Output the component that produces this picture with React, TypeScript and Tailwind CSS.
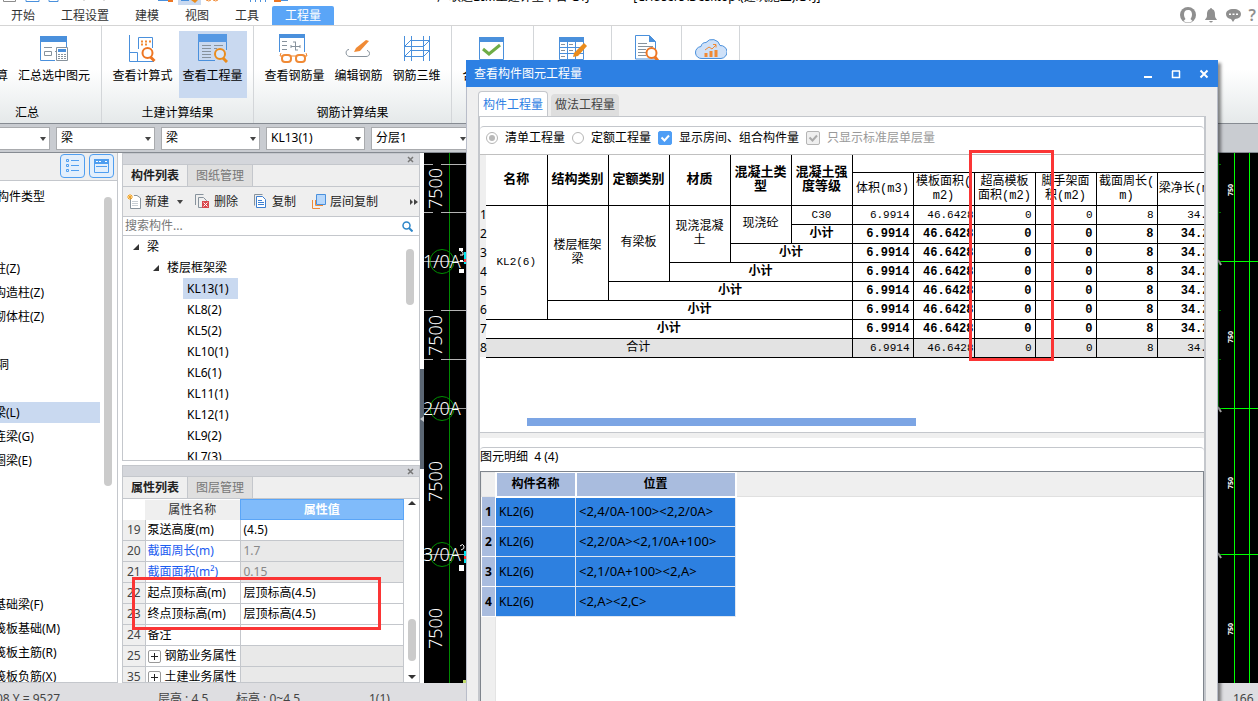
import type { ReactNode } from "react";
import clsx from "clsx";

const BLUE = "#4a90dc";
const ORANGE = "#f08a35";
const GRAY = "#87929c";

/* ---------- ribbon icons ---------- */

function SummaryIcon() {
	return (
		<svg width="28" height="26" viewBox="0 0 28 26" fill="none">
			<path d="M.5 6v18.500H15M26.500 6v5" stroke={BLUE} />
			<path d="M0 0h27v6H0z" fill={BLUE} />
			<path d="M4 11.500h8M4.500 15.500h7v4h-7zM15 15.500h1" stroke={GRAY} />
			<path d="M16.500 11.500h11v13h-11z" fill="#fff" stroke={GRAY} />
			<path d="M18 13h8v3h-8z" fill={BLUE} />
			<path d="M18 18.500h8M18 20.500h8M18 22.500h8" stroke={GRAY} strokeDasharray="2 1" />
		</svg>
	);
}

function FormulaIcon() {
	return (
		<svg width="28" height="28" viewBox="0 0 28 28" fill="none">
			<path d="M1.500 0v26.500H26M1.500 17.500h8v9M10.500 14V2.500h14V13" stroke={BLUE} />
			<path d="M13 6.500h10M13 9.500h7" stroke={ORANGE} strokeWidth="2" strokeDasharray="2 2" />
			<circle cx="19.500" cy="18" r="5" fill="#fff" stroke="#ee7623" strokeWidth="2" />
			<path d="M22.500 22l4 4" stroke="#ee7623" strokeWidth="3" />
		</svg>
	);
}

function ViewQuantityIcon() {
	return (
		<svg width="30" height="29" viewBox="0 0 30 29" fill="none">
			<path d="M.5 7v19.500H17M28.500 7v9" stroke={BLUE} />
			<path d="M0 0h29v8H0z" fill="#5598e3" />
			<path d="M4 11.500h9M4 14.500h9M4 17.500h9M4 20.500h9M4 23.500h9M16 11.500h9M16 14.500h3" stroke={GRAY} />
			<circle cx="22" cy="20" r="5" fill="#d9e6f7" stroke="#ea8c1c" strokeWidth="2" />
			<path d="M25 24l4 4" stroke="#ea8c1c" strokeWidth="3" />
		</svg>
	);
}

function RebarViewIcon() {
	return (
		<svg width="30" height="29" viewBox="0 0 30 29" fill="none">
			<path d="M.5 4v14M25.500 4v14" stroke={BLUE} />
			<path d="M0 0h26v4H0z" fill={BLUE} />
			<path d="M3 7.500h5M3 11.500h5M3 15.500h5M16.500 8v8M12 12.500h9M12 11v3M21 11v3M14 8h3M16 16h3" stroke={GRAY} />
			<path d="M2 19l-1 3h27l-1-3" stroke={ORANGE} />
			<rect x="3" y="21" width="9" height="7" rx="3" fill="#fff" stroke={ORANGE} strokeWidth="2" />
			<rect x="17" y="21" width="9" height="7" rx="3" fill="#fff" stroke={ORANGE} strokeWidth="2" />
		</svg>
	);
}

function EditRebarIcon() {
	return (
		<svg width="26" height="28" viewBox="0 0 26 28" fill="none">
			<path d="M4 14.500c-4 0-4 7 1 7h16c5 0 4-6 1-6" stroke={GRAY} />
			<path d="M21 5l3 1-9 10-6 1 2-4z" fill={ORANGE} />
		</svg>
	);
}

function Rebar3dIcon() {
	return (
		<svg width="28" height="26" viewBox="0 0 28 26" fill="none" stroke={BLUE}>
			<path d="M1.500 0v25M8.500 0v25M20.500 0v25M26.500 0v25M8 4.500h19M1 10.500h19M8 14.500h19M1 20.500h19M1 11l7-7M20 11l7-7M1 21l7-7M20 21l7-7" />
		</svg>
	);
}

function CheckDocIcon() {
	return (
		<svg width="26" height="24" viewBox="0 0 26 24" fill="none">
			<path d="M.5.500h24v22H.5z" stroke={BLUE} fill="#fff" />
			<path d="M0 0h25v5H0z" fill={BLUE} />
			<path d="M4 12l6 5L21 8" stroke="#6fad46" strokeWidth="3" />
		</svg>
	);
}

function EditTableIcon() {
	return (
		<svg width="28" height="24" viewBox="0 0 28 24" fill="none">
			<path d="M.5.500h24v22H.5zM8.500 4v18M16.500 4v18M0 10.500h25M0 16.500h25" stroke={BLUE} />
			<path d="M0 0h25v5H0z" fill={BLUE} />
			<path d="M2 7.500h4M10 7.500h4M2 13.500h4M10 13.500h4M2 19.500h4" stroke={GRAY} />
			<path d="M25 6l3 3-9 10-5 1 1-4z" fill="#ea8c1c" />
		</svg>
	);
}

function ReportIcon() {
	return (
		<svg width="24" height="28" viewBox="0 0 24 28" fill="none">
			<path d="M.5.500h14l6 6V24H.5z" stroke={BLUE} fill="#fff" />
			<path d="M14 0l7 7h-7z" fill={BLUE} />
			<path d="M3 8.500h9M3 11.500h15M3 14.500h8M3 17.500h8M3 20.500h8" stroke={GRAY} />
			<circle cx="16.500" cy="18" r="5" fill="#fff" stroke="#ee7623" strokeWidth="2" />
			<path d="M20 22l3 4" stroke="#ee7623" strokeWidth="3" />
		</svg>
	);
}

function CloudIcon() {
	return (
		<svg width="32" height="22" viewBox="0 0 32 22" fill="none">
			<path d="M7 20.500a6 6 0 01-1-12 5 5 0 015-4 8 8 0 0114 3 6.500 6.500 0 011 13z" fill="#cfe1f8" stroke={BLUE} />
			<path d="M11 19v-4M16 19v-6M21 19v-7" stroke={ORANGE} strokeWidth="3" />
			<path d="M10 12l4-3 3 2 4-4M18 6.500h3v3" stroke={ORANGE} />
		</svg>
	);
}

/* Quick access bar: only its lower edge shows above the menu. */
function QuickAccess() {
	return (
		<svg width="300" height="6" viewBox="0 0 300 6" fill="none" aria-hidden="true">
			<path d="M3.500 0v1.500h12V0" stroke="#8c8c8c" />
			<path d="M26 0v1.500h13V0M49 0v1.500h9V0" stroke={BLUE} />
			<path d="M178 0h23v5h-23z" fill="#c9d9f0" />
			<path d="M158 0h14v1h-14zM181 0h8v1h-8zM281 0h7v1h-7z" fill={BLUE} />
			<path d="M168 0h5v2h-5zM274 0h7v2h-7z" fill="#ee7623" />
			<path d="M191 0h7l-3 3z" fill="#ea8c1c" />
			<path d="M206 0q3 2 5 0M213 0q3 2 5 0" stroke={ORANGE} />
			<path d="M250.500 0v2M255.500 0v2M260.500 0v2M265.500 0v2" stroke={BLUE} />
			<path d="M84 0v1M104 0v1" stroke="#bbb" />
		</svg>
	);
}

/* ---------- shared pieces ---------- */

function RibbonButton({ icon, label, active, title }: { icon: ReactNode; label?: string; active?: boolean; title?: string }) {
	return (
		<button
			aria-label={title}
			className={clsx("flex h-[67px] shrink-0 flex-col items-center whitespace-nowrap", active ? "w-[68px] bg-[#c9d9f0]" : "px-1")}
		>
			<span className="flex h-[35px] items-center justify-center">{icon}</span>
			<span className="leading-5">{label}</span>
		</button>
	);
}

function RibbonGroup({ title, className, children }: { title?: string; className: string; children: ReactNode }) {
	return (
		<div className={clsx("flex shrink-0 flex-col border-r border-[#d3d6d9] pt-[5px]", className)}>
			<div className="flex justify-center gap-[2px]">{children}</div>
			<div className="pt-[5px] text-center leading-5">{title}</div>
		</div>
	);
}

function Combo({ value, label }: { value: string; label: string }) {
	return (
		<label className="relative block w-[99px] shrink-0">
			<select aria-label={label} className="h-[23px] w-full appearance-none border border-[#a9abae] bg-white px-1 text-[12px] text-black">
				<option>{value}</option>
			</select>
			<svg className="pointer-events-none absolute top-[10px] right-1" width="6" height="4" viewBox="0 0 6 4">
				<path d="M0 0h6L3 4z" fill="#444" />
			</svg>
		</label>
	);
}

function PanelTitle() {
	return (
		<div className="flex h-[11px] shrink-0 items-center justify-end border-b border-[#c4c7cc] bg-[#d4d6db] pr-[5px]">
			<button aria-label="关闭">
				<svg width="7" height="7" viewBox="0 0 7 7" className="block">
					<path d="M1 1l5 5M6 1L1 6" stroke="#777" strokeWidth="1.500" />
				</svg>
			</button>
		</div>
	);
}

function PanelTabs({ tabs }: { tabs: string[] }) {
	return (
		<div className="flex h-[22px] shrink-0 border-b border-[#c4c7cc] bg-[#efefef]">
			{tabs.map((tab, i) => (
				<button
					key={tab}
					className={clsx("border-r border-[#c4c7cc] px-2 leading-[21px]", i === 0 ? "font-semibold text-[#222]" : "bg-[#dfdfdf] text-[#777]")}
				>
					{tab}
				</button>
			))}
		</div>
	);
}

/* ---------- left side ---------- */

const categories = ["构件类型", "", "", "柱(Z)", "构造柱(Z)", "砌体柱(Z)", "", "洞", "", "梁(L)", "连梁(G)", "圈梁(E)", "", "", "", "", "", "基础梁(F)", "筏板基础(M)", "筏板主筋(R)", "筏板负筋(X)"];

function CategoryPanel() {
	return (
		<aside className="flex w-[118px] shrink-0 flex-col border-r border-b border-[#c4c7cc] bg-white">
			<div className="flex h-7 shrink-0 items-start justify-end gap-1 border-b border-[#c4c7cc] bg-[#efefef] pt-px pr-[3px]">
				<button aria-label="列表" className="flex h-6 w-[25px] items-center justify-center rounded-sm border border-[#4f9ef0] bg-[#e3effc]">
					<svg width="13" height="14" viewBox="0 0 13 14" fill="none" stroke="#4f9ef0">
						<path d="M.5.500h2v2h-2zM.5 5.500h2v2h-2zM.5 10.500h2v2h-2zM5 1.500h8M5 6.500h8M5 11.500h8" />
					</svg>
				</button>
				<button aria-label="面板" className="flex h-6 w-[25px] items-center justify-center rounded-sm border border-[#4f9ef0] bg-[#e3effc]">
					<svg width="15" height="14" viewBox="0 0 15 14" fill="none">
						<path d="M.5.500h14v13H.5z" stroke="#4f9ef0" />
						<path d="M0 0h15v5H0z" fill="#4f9ef0" />
						<path d="M2 2.500h6M11 2.500h3" stroke="#fff" strokeDasharray="2 1" />
						<path d="M2 7.500h11" stroke="#4f9ef0" />
					</svg>
				</button>
			</div>
			<div className="flex min-h-0 flex-1">
				<ul className="w-[100px] overflow-hidden pt-[3px]">
					{categories.map((name, i) => (
						<li key={i} className="flex h-6 items-center">
							<span className={clsx("block h-[21px] w-full leading-[22px] whitespace-nowrap", name === "梁(L)" && "bg-[#c9d9f0]")}>
								<span className={clsx("block", i === 0 || name === "洞" ? "-ml-[3px]" : "-ml-[6px]")}>{name}</span>
							</span>
						</li>
					))}
				</ul>
				<div className="mt-4 ml-1 h-[289px] w-2 rounded-full bg-[#cbcbcb]" />
			</div>
		</aside>
	);
}

const beams = ["KL13(1)", "KL8(2)", "KL5(2)", "KL10(1)", "KL6(1)", "KL11(1)", "KL12(1)", "KL9(2)", "KL7(3)"];

function Arrow() {
	return (
		<svg width="6" height="6" viewBox="0 0 6 6">
			<path d="M6 0v6H0z" fill="#333" />
		</svg>
	);
}

function ComponentPanel() {
	return (
		<section className="flex h-[308px] shrink-0 flex-col border border-[#c4c7cc] bg-white">
			<PanelTitle />
			<PanelTabs tabs={["构件列表", "图纸管理"]} />
			<div className="flex h-[30px] shrink-0 items-center border-b border-[#c4c7cc] bg-[#efefef] pl-1 whitespace-nowrap text-[#222]">
				<button className="flex items-center gap-1">
					<svg width="14" height="15" viewBox="0 0 14 15" fill="none">
						<path d="M3.500 4v10.500h10V4L10 1.500H7" fill="#fff" stroke={GRAY} />
						<path d="M5 7.500h6M5 9.500h6M5 11.500h6" stroke="#c8ced4" />
						<path d="M3 0v6M0 3h6M1 1l4 4M5 1L1 5" stroke="#f5a21d" />
					</svg>
					新建
				</button>
				<svg className="ml-2" width="6" height="4" viewBox="0 0 6 4"><path d="M0 0h6L3 4z" fill="#444" /></svg>
				<button className="ml-3 flex items-center gap-[5px]">
					<svg width="14" height="15" viewBox="0 0 14 15" fill="none">
						<path d="M.5 11V.500h8M3.500 3.500h5l3 3v7h-8z" stroke={GRAY} />
						<path d="M7 7h7v7H7z" fill="#d9484d" />
						<path d="M8.500 8.500l4 4M12.500 8.500l-4 4" stroke="#fff" />
					</svg>
					删除
				</button>
				<button className="ml-4 flex items-center gap-[6px]">
					<svg width="12" height="15" viewBox="0 0 12 15" fill="none">
						<path d="M.5 11.500V.500h8" stroke={GRAY} />
						<path d="M2.500 2.500h6l3 3v8h-9z" fill="#fff" stroke="#3d7fd0" />
						<path d="M4 6.500h4M4 8.500h6M4 10.500h6" stroke="#3d7fd0" />
					</svg>
					复制
				</button>
				<button className="ml-4 flex items-center gap-1">
					<svg width="14" height="15" viewBox="0 0 14 15" fill="none">
						<path d="M.5 6v8.500H8M3.500 6v5.500H11" stroke={ORANGE} />
						<path d="M4.500.500h9v10h-9z" fill="#b8d8fb" stroke={BLUE} />
					</svg>
					层间复制
				</button>
				<button aria-label="更多" className="ml-auto pr-px">
					<svg width="8" height="6" viewBox="0 0 8 6"><path d="M0 0l3 3-3 3zM4 0l4 3-4 3z" fill="#444" /></svg>
				</button>
			</div>
			<div className="flex h-[19px] shrink-0 items-center border-b border-[#c4c7cc] pr-[6px] pl-[2px]">
				<input aria-label="搜索构件" placeholder="搜索构件..." className="min-w-0 flex-1 bg-transparent text-[12px] outline-none placeholder:text-[#777]" />
				<svg width="11" height="11" viewBox="0 0 11 11" fill="none" stroke="#2e86c8">
					<circle cx="4.500" cy="4.500" r="3.500" strokeWidth="1.500" />
					<path d="M7 7l3.500 3.500" strokeWidth="2" />
				</svg>
			</div>
			<div className="flex min-h-0 flex-1">
				<ul className="flex-1 overflow-hidden leading-[21px]">
					<li className="flex items-center gap-2 pl-[10px]"><Arrow />梁</li>
					<li className="flex items-center gap-2 pl-[30px]"><Arrow />楼层框架梁</li>
					{beams.map((beam, i) => (
						<li key={beam} className="pl-[60px]">
							<span className={clsx("inline-block px-1", i === 0 && "w-[55px] bg-[#c9d9f0]")}>{beam}</span>
						</li>
					))}
				</ul>
				<div className="mt-[13px] mr-[5px] h-14 w-2 rounded-full bg-[#cbcbcb]" />
			</div>
		</section>
	);
}

const properties = [
	{ no: 19, name: "泵送高度(m)", value: "(4.5)" },
	{ no: 20, name: "截面周长(m)", value: "1.7", locked: true },
	{ no: 21, name: "截面面积(m²)", value: "0.15", locked: true },
	{ no: 22, name: "起点顶标高(m)", value: "层顶标高(4.5)" },
	{ no: 23, name: "终点顶标高(m)", value: "层顶标高(4.5)" },
	{ no: 24, name: "备注", value: "" },
	{ no: 25, name: "钢筋业务属性", value: "", group: true },
	{ no: 35, name: "土建业务属性", value: "", group: true },
];

function PropertyPanel() {
	return (
		<section className="relative mt-1 flex min-h-0 flex-1 flex-col border border-[#c4c7cc] bg-white">
			<PanelTitle />
			<PanelTabs tabs={["属性列表", "图层管理"]} />
			<div className="flex min-h-0 flex-1 overflow-hidden">
				<div className="flex-1">
					<table className="w-full table-fixed border-collapse">
						<colgroup>
							<col className="w-[22px]" />
							<col className="w-[95px]" />
							<col />
						</colgroup>
						<thead>
							<tr className="h-5">
								<th aria-label="序号" />
								<th className="bg-[#efefef] font-normal text-[#333]">属性名称</th>
								<th className="border border-[#5aa5f7] bg-[#80bbfa] font-semibold text-white">属性值</th>
							</tr>
						</thead>
						<tbody>
							{properties.map((p) => (
								<tr key={p.no} className="h-[21px] leading-5">
									<td className="border-r border-b border-[#c4c7cc] bg-[#efefef] p-0 text-center text-[#444]">{p.no}</td>
									<td className={clsx("border-r border-b border-[#c4c7cc] p-0 pl-[2px] whitespace-nowrap", p.locked && "text-[#1a5cf0]")}>
										{p.group ? (
											<span className="flex items-center gap-1">
												<button aria-label={"展开" + p.name} className="flex size-[13px] items-center justify-center rounded-xs border border-[#999] bg-white">
													<svg width="7" height="7" viewBox="0 0 7 7"><path d="M3.500 0v7M0 3.500h7" stroke="#222" /></svg>
												</button>
												{p.name}
											</span>
										) : (
											p.name
										)}
									</td>
									<td className={clsx("border-r border-b border-[#c4c7cc] p-0 pl-[3px]", p.locked && "text-[#888]", (p.locked || p.group) && "bg-[#e9e9e9]")}>{p.value}</td>
								</tr>
							))}
						</tbody>
					</table>
				</div>
				<div className="flex w-[15px] shrink-0 flex-col items-center pt-[2px] pb-[3px]">
					<svg width="8" height="4" viewBox="0 0 8 4"><path d="M0 4h8L4 0z" fill="#333" /></svg>
					<div className="mt-auto mb-[14px] h-[42px] w-2 rounded-full bg-[#cbcbcb]" />
					<svg width="8" height="4" viewBox="0 0 8 4"><path d="M0 0h8L4 4z" fill="#333" /></svg>
				</div>
			</div>
			<div className="pointer-events-none absolute top-[111px] left-[9px] h-[53px] w-[249px] border-[3px] border-[#fb3535]" />
		</section>
	);
}

/* ---------- drawing area ---------- */

const cadText = "font-['Noto_Sans',sans-serif] text-[18px] font-light";

function CanvasLeft() {
	return (
		<svg width="42" height="530" viewBox="0 0 42 530" fill="none" className="shrink-0">
			<path d="M25.500 0v530" stroke="#008800" />
			{[11.500, 59.500, 157.500, 206.500].map((y) => (
				<path key={y} d={`M0 ${y}h9M17 ${y}h25`} stroke="#b4b4b4" />
			))}
			{[108.500, 255.500, 401.500].map((y, i) => (
				<g key={y}>
					<path d={`M0 ${y}h42`} stroke="#a0a0a0" />
					<circle cx="18" cy={y} r="12" stroke="#009000" />
					<text x="-1" y={y + 6} fill="#fff" className={cadText}>{i + 1}/0A</text>
				</g>
			))}
			{[56, 203, 349, 496].map((y) => (
				<text key={y} transform={`translate(18 ${y}) rotate(-90)`} fill="#fff" className={cadText}>7500</text>
			))}
			<path d="M35 95h4v3h-4zM35 116h5v4h-5zM35 412h5v6h-5zM36 107h3v2h-3z" fill="#fff" />
			<path d="M36 393q3-3 4 0t-3 4M37 98q3 1 2 4h-3" stroke="#fff" />
			<path d="M41 99v12M41 398v12" stroke="#00e5f0" strokeWidth="2" />
			<path d="M41 106v3M41 403v3" stroke="#f33" strokeWidth="2" />
			<path d="M39 527h3v3h-3z" fill="#c0dc6a" />
		</svg>
	);
}

function CanvasRight() {
	return (
		<svg width="40" height="530" viewBox="0 0 40 530" fill="none" className="shrink-0">
			<path d="M.5 0v255M0 11.500h3M0 59.500h3M0 157.500h3M0 206.500h3" stroke="#00a000" />
			<path d="M16.500 0v530M31.500 0v530M0 108.500h40M0 255.500h40M0 401.500h40" stroke="#00ff00" />
			{[43, 190, 336, 482].map((y) => (
				<text key={y} transform={`translate(15 ${y}) rotate(-90)`} fill="#fff" className="font-['Noto_Sans',sans-serif] text-[7px] font-bold">750</text>
			))}
			<path d="M0 107l3 5M0 254l3 5M0 400l3 5" stroke="#ddd" strokeWidth="2" />
		</svg>
	);
}

/* ---------- dialog ---------- */

function Cell({ children, bold = true, className, ...span }: { children?: ReactNode; bold?: boolean; className?: string; colSpan?: number; rowSpan?: number }) {
	return (
		<td {...span} className={clsx("border border-black p-0 text-center leading-[14px]", bold && "font-bold", className)}>
			{children}
		</td>
	);
}

function Numbers({ bold }: { bold?: boolean }) {
	const values = ["6.9914", "46.6428", "0", "0", "8", "34.2"];
	return (
		<>
			{values.map((v, i) => (
				<td
					key={i}
					className={clsx(
						"overflow-hidden border border-black p-0 text-right leading-[14px] whitespace-nowrap",
						bold ? "text-[12px] font-bold" : "text-[11px]",
						i === 1 ? "pr-0" : i < 5 ? "pr-[3px]" : bold ? "pr-2" : "pr-1",
					)}
				>
					{v}
				</td>
			))}
		</>
	);
}

function RowNo({ n }: { n: number }) {
	return <th className="bg-[#efefef] p-0 text-left font-['Noto_Sans',sans-serif] text-[12px] leading-[14px] font-normal">{n}</th>;
}

const quantityHeads = [["体积(m3)"], ["模板面积(", "m2)"], ["超高模板", "面积(m2)"], ["脚手架面", "积(m2)"], ["截面周长(", "m)"], ["梁净长(m)"]];

function QuantityTable() {
	return (
		<table className="w-[738px] table-fixed border-collapse font-['Liberation_Mono','Noto_Sans_CJK_SC',monospace] text-[12px]">
			<colgroup>
				<col className="w-[6px]" />
				{Array.from({ length: 12 }, (_, i) => (
					<col key={i} className="w-[61px]" />
				))}
			</colgroup>
			<thead>
				<tr className="h-[17px]">
					<th rowSpan={2} className="bg-[#efefef]" aria-label="行号" />
					{["名称", "结构类别", "定额类别", "材质", "混凝土类型", "混凝土强度等级"].map((h) => (
						<th key={h} rowSpan={2} className="border-r border-b border-black p-0 text-[13px] leading-[14px]">{h}</th>
					))}
					<th colSpan={6} className="border-b border-black" aria-label="工程量名称" />
				</tr>
				<tr className="h-[33px]">
					{quantityHeads.map((lines) => (
						<th key={lines[0]} className="overflow-hidden border border-black p-0 leading-[14px] font-normal whitespace-nowrap">
							{lines.map((line) => (
								<span key={line} className="block">{line}</span>
							))}
						</th>
					))}
				</tr>
			</thead>
			<tbody>
				<tr className="h-[19px]">
					<RowNo n={1} />
					<Cell bold={false} rowSpan={6} className="border-l-0 text-[11px]">KL2(6)</Cell>
					<Cell bold={false} rowSpan={5} className="px-1">楼层框架梁</Cell>
					<Cell bold={false} rowSpan={4}>有梁板</Cell>
					<Cell bold={false} rowSpan={3} className="px-1">现浇混凝土</Cell>
					<Cell bold={false} rowSpan={2}>现浇砼</Cell>
					<Cell bold={false} className="text-[11px]">C30</Cell>
					<Numbers />
				</tr>
				{[1, 2, 3, 4, 5, 6].map((span) => (
					<tr key={span} className="h-[19px]">
						<RowNo n={span + 1} />
						<Cell colSpan={span} className={clsx(span === 6 && "border-l-0")}>小计</Cell>
						<Numbers bold />
					</tr>
				))}
				<tr className="h-[19px] bg-[#e3e3e3]">
					<RowNo n={8} />
					<Cell bold={false} colSpan={6} className="border-l-0 pr-[61px]">合计</Cell>
					<Numbers />
				</tr>
			</tbody>
		</table>
	);
}

function Check({ disabled, children }: { disabled?: boolean; children: ReactNode }) {
	return (
		<label className={clsx("flex items-center gap-[7px]", disabled && "text-[#999]")}>
			<span className="grid">
				<input
					type="checkbox"
					defaultChecked
					disabled={disabled}
					className={clsx("size-[14px] appearance-none rounded-xs border [grid-area:1/1]", disabled ? "border-[#b5b5b5] bg-[#efefef]" : "border-[#4f9ef5] bg-[#4f9ef5]")}
				/>
				<svg width="14" height="14" viewBox="0 0 14 14" fill="none" className="pointer-events-none [grid-area:1/1]">
					<path d="M3.500 6.500l3 3 4.500-5" stroke={disabled ? "#aaa" : "#fff"} strokeWidth="2" />
				</svg>
			</span>
			{children}
		</label>
	);
}

function Radio({ checked, children }: { checked?: boolean; children: ReactNode }) {
	return (
		<label className="flex items-center gap-[7px]">
			<input
				type="radio"
				name="quantity"
				defaultChecked={checked}
				className="size-3 appearance-none rounded-full border border-[#b5b5b5] bg-clip-content p-[2px] checked:bg-[#b8b8b8]"
			/>
			{children}
		</label>
	);
}

const details = ["<2,4/0A-100><2,2/0A>", "<2,2/0A><2,1/0A+100>", "<2,1/0A+100><2,A>", "<2,A><2,C>"];

function QuantityDialog() {
	return (
		<div role="dialog" aria-label="查看构件图元工程量" className="absolute top-[60px] right-[40px] bottom-0 left-[466px] flex flex-col border-x border-[#b9bdc9] bg-[#efefef] shadow-[3px_3px_3px_rgba(0,0,0,0.45)]">
			<div className="-mx-px flex h-[27px] shrink-0 items-center bg-[#2d80e3] pr-[9px] pl-2 text-white">
				<h2 className="flex-1">查看构件图元工程量</h2>
				<div className="flex items-center gap-[18px]">
					<button aria-label="最小化"><svg width="10" height="10" viewBox="0 0 10 10"><path d="M1 8h8" stroke="#fff" strokeWidth="2" /></svg></button>
					<button aria-label="最大化"><svg width="10" height="10" viewBox="0 0 10 10"><path d="M1.500 2v6.500h7V2M1 2h8" fill="none" stroke="#fff" strokeWidth="1.500" /></svg></button>
					<button aria-label="关闭"><svg width="10" height="10" viewBox="0 0 10 10"><path d="M1.500 1.500l7 7M8.500 1.500l-7 7" stroke="#fff" strokeWidth="2" /></svg></button>
				</div>
			</div>
			<div className="flex h-[29px] shrink-0 items-end gap-[3px] pl-[11px]">
				<button className="-mb-px h-[26px] rounded-t-sm border border-b-0 border-[#c4c7cc] bg-white px-1 text-[#2d80e3]">构件工程量</button>
				<button className="h-[22px] rounded-t-sm bg-[#dedede] px-1 text-[#444]">做法工程量</button>
			</div>
			<div className="mr-[11px] ml-[11px] flex min-h-0 flex-1 flex-col border-t border-r-2 border-l-2 border-[#c4c7cc] bg-white">
				<div className="relative mt-[9px] flex h-[307px] shrink-0 flex-col rounded-t-sm border-y border-[#c4c7cc]">
					<div className="mb-[6px] flex h-[21px] shrink-0 items-center gap-[7px] whitespace-nowrap pl-[6px]">
						<Radio checked>清单工程量</Radio>
						<Radio>定额工程量</Radio>
						<Check>显示房间、组合构件量</Check>
						<Check disabled>只显示标准层单层量</Check>
					</div>
					<div className="overflow-hidden border-t border-[#c0c0c0]">
						<QuantityTable />
					</div>
					<div className="mt-auto mb-[6px] ml-[47px] h-2 w-[389px] bg-[#7ca5e4]" />
					<div className="pointer-events-none absolute top-[23px] left-[489px] h-[211px] w-[85px] border-[3px] border-[#fb3535]" />
				</div>
				<div className="mb-[9px] h-[5px] shrink-0 bg-[#efefef]" />
				<div className="h-6 shrink-0 rounded-t-sm border-t border-[#c4c7cc] leading-[18px] whitespace-pre">图元明细  4 (4)</div>
				<div className="flex min-h-0 flex-1 flex-col border-t border-r border-l border-[#7f858d] bg-[linear-gradient(to_right,#efefef_14px,#e4e4e4_14px,#e4e4e4_15px,transparent_15px)]">
					<div className="flex">
						<table className="w-[254px] shrink-0 table-fixed border-collapse">
							<colgroup>
								<col className="w-[14px]" />
								<col className="w-20" />
								<col className="w-40" />
							</colgroup>
							<thead>
								<tr className="h-6">
									<th className="border border-[#e8e8e8] bg-[#efefef]" aria-label="序号" />
									<th className="border-2 border-t-0 border-white bg-[#a9bcde] p-0 font-semibold">构件名称</th>
									<th className="border-2 border-t-0 border-white bg-[#a9bcde] p-0 font-semibold">位置</th>
								</tr>
							</thead>
							<tbody>
								{details.map((d, i) => (
									<tr key={d} className="h-[30px]">
										<th className="border border-white bg-[#a9bcde] p-0 font-bold">{i + 1}</th>
										<td className="border border-[#dfe6f0] bg-[#2d80e0] p-0 pl-[3px]">KL2(6)</td>
										<td className="border border-[#dfe6f0] bg-[#2d80e0] p-0 pl-[3px] text-[13px] whitespace-nowrap">{d}</td>
									</tr>
								))}
							</tbody>
						</table>
						<div className="h-[25px] flex-1 border-b border-[#e0e0e0] bg-[#efefef]" />
					</div>
				</div>
			</div>
		</div>
	);
}

/* ---------- page ---------- */

export default function App() {
	return (
		<div className="relative flex h-screen w-full flex-col overflow-hidden bg-white font-['Noto_Sans','Noto_Sans_CJK_SC',sans-serif] text-[12px] text-black">
			<div className="flex h-[6px] shrink-0 items-end overflow-hidden">
				<QuickAccess />
				<span className="ml-[137px] leading-[18px] whitespace-pre">广联达BIM土建计量平台 GTJ              [C:\Users\Desktop\(建筑施工).GTJ]</span>
			</div>
			<header className="flex h-5 shrink-0 items-end border-b border-[#d5d5d5]">
				<nav className="flex flex-1 items-center pl-[11px] leading-[19px] text-[#333]">
					{["开始", "工程设置", "建模", "视图", "工具", "工程量"].map((item, i) => (
						<a key={item} href="#" className={clsx("pr-[13px]", i > 0 && "pl-[13px]", i === 5 && "rounded-t-xs bg-[#5aa5f7] text-white")}>{item}</a>
					))}
				</nav>
				<div className="flex items-center gap-2 pr-[2px] pb-[2px]">
					<button aria-label="用户">
						<svg width="16" height="16" viewBox="0 0 16 16">
							<circle cx="8" cy="8" r="8" fill="#8f8f8f" />
							<path d="M8 3c3 0 4 2 4 4.500 0 2-1 3.500-1.500 4.500l2 2q-4.500 3-9 0l2-2C5 11 4 9.500 4 7.500 4 5 5 3 8 3z" fill="#fff" />
						</svg>
					</button>
					<button aria-label="通知">
						<svg width="14" height="15" viewBox="0 0 14 15" fill="#8f8f8f">
							<path d="M7 0c1 0 1 1 1 1 3 1 3 4 3 6 0 3 1 3 2 5H1c1-2 2-2 2-5 0-2 0-5 3-6 0 0 0-1 1-1zM5 13h4q-2 3-4 0z" />
						</svg>
					</button>
					<button aria-label="消息">
						<svg width="15" height="14" viewBox="0 0 15 14">
							<path d="M7.500 1C3 1 0 3 0 6s2 4.500 5 5l2 3 2-3c4-.500 6-2 6-5s-3-5-7.500-5z" fill="#8f8f8f" />
							<path d="M3 5.500h2v1.500H3zM6.500 5.500h2v1.500h-2zM10 5.500h2v1.500h-2z" fill="#fff" />
						</svg>
					</button>
					<button className="text-[16px] leading-4 font-semibold text-[#8f8f8f]">?</button>
				</div>
			</header>

			<div className="flex h-[97px] shrink-0 bg-gradient-to-b from-white from-45% to-[#e5e9ea]">
				<RibbonGroup className="w-[102px]">
					<div className="flex h-[87px] w-full flex-col">
						<div className="flex gap-[2px]">
							<span className="-ml-1 w-4 pt-[35px] leading-5">算</span>
							<RibbonButton icon={<SummaryIcon />} label="汇总选中图元" />
						</div>
						<span className="pt-[5px] pl-[15px] leading-5">汇总</span>
					</div>
				</RibbonGroup>
				<RibbonGroup title="土建计算结果" className="w-[152px]">
					<RibbonButton icon={<FormulaIcon />} label="查看计算式" />
					<RibbonButton icon={<ViewQuantityIcon />} label="查看工程量" active />
				</RibbonGroup>
				<RibbonGroup title="钢筋计算结果" className="w-[198px]">
					<RibbonButton icon={<RebarViewIcon />} label="查看钢筋量" />
					<RibbonButton icon={<EditRebarIcon />} label="编辑钢筋" />
					<RibbonButton icon={<Rebar3dIcon />} label="钢筋三维" />
				</RibbonGroup>
				<RibbonGroup className="w-[82px]"><RibbonButton icon={<CheckDocIcon />} label="合法性检查" /></RibbonGroup>
				<RibbonGroup className="w-[78px]"><RibbonButton icon={<EditTableIcon />} title="编辑报表" /></RibbonGroup>
				<RibbonGroup className="w-[70px]"><RibbonButton icon={<ReportIcon />} title="查看报表" /></RibbonGroup>
				<RibbonGroup className="w-[58px]"><RibbonButton icon={<CloudIcon />} title="云指标" /></RibbonGroup>
			</div>

			<div className="flex h-[30px] shrink-0 items-center gap-[6px] border-y border-[#868b92] bg-[#c9ccd1]">
				<div className="-ml-[49px]"><Combo value="" label="楼层" /></div>
				<Combo value="梁" label="构件大类" />
				<Combo value="梁" label="构件类型" />
				<Combo value="KL13(1)" label="构件" />
				<Combo value="分层1" label="分层" />
			</div>

			<main className="flex min-h-0 flex-1">
				<CategoryPanel />
				<div className="ml-1 flex w-[298px] shrink-0 flex-col">
					<ComponentPanel />
					<PropertyPanel />
				</div>
				<div className="flex w-1 shrink-0 flex-col bg-white pt-[216px]">
					<button aria-label="收起" className="flex h-[100px] items-center bg-[#5b6673]">
						<svg width="4" height="6" viewBox="0 0 4 6"><path d="M4 0v6L0 3z" fill="#c4c7cc" /></svg>
					</button>
				</div>
				<div className="flex min-w-0 flex-1 justify-between overflow-hidden bg-black">
					<CanvasLeft />
					<CanvasRight />
				</div>
			</main>

			<footer className="flex h-[18px] shrink-0 overflow-hidden bg-[#dedee1] leading-8 whitespace-pre text-[#444]">
				<span className="-ml-1 w-[162px]">08 Y = 9527</span>
				<span className="w-[78px]">层高 : 4.5</span>
				<span className="w-[133px]">标高 : 0~4.5</span>
				<span>1(1)</span>
				<span className="ml-auto w-[25px]">166.</span>
			</footer>

			<QuantityDialog />
		</div>
	);
}
